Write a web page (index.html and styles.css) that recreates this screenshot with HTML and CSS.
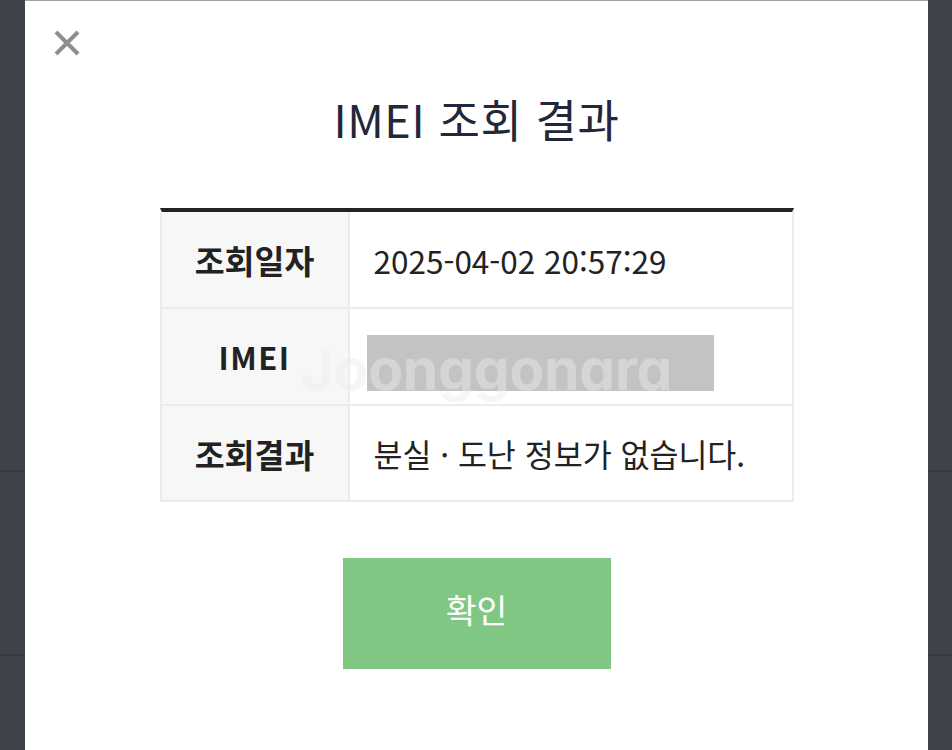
FILE: index.html
```html
<!DOCTYPE html>
<html lang="ko">
<head>
<meta charset="utf-8">
<title>IMEI 조회 결과</title>
<link rel="stylesheet" href="styles.css">
</head>
<body>
<div class="modal">
  <button class="close" aria-label="닫기">
    <svg width="26" height="26" viewBox="0 0 26 26"><path d="M2 2 L24 24 M24 2 L2 24" stroke="#8d8d92" stroke-width="4" stroke-linecap="butt" fill="none"/></svg>
  </button>
  <h1 class="title">IMEI 조회 결과</h1>
  <div class="result">
    <div class="row">
      <div class="label">조회일자</div>
      <div class="value">2025-04-02 20:57:29</div>
    </div>
    <div class="row">
      <div class="label imei">IMEI</div>
      <div class="value"><span class="masked"></span></div>
    </div>
    <div class="row">
      <div class="label">조회결과</div>
      <div class="value">분실 · 도난 정보가 없습니다.</div>
    </div>
    <div class="watermark">Joonggonara</div>
  </div>
  <button class="confirm">확인</button>
</div>
</body>
</html>
```

FILE: styles.css
```css
html, body {
  margin: 0;
  padding: 0;
}
body {
  background-color: #40434b;
  background-image:
    linear-gradient(to bottom, transparent 470px, #383b42 470px, #383b42 472px, transparent 472px),
    linear-gradient(to bottom, transparent 654px, #383b42 654px, #383b42 656px, transparent 656px);
  height: 750px;
  overflow: hidden;
  font-family: "Noto Sans CJK KR", "Noto Sans", sans-serif;
}
.modal {
  position: relative;
  margin-left: 25px;
  width: 903px;
  height: 760px;
  background: #ffffff;
  border-top: 1px solid #a3a3a6;
  box-sizing: border-box;
  display: flex;
  flex-direction: column;
  align-items: center;
}
.close {
  position: absolute;
  left: 29px;
  top: 29px;
  width: 26px;
  height: 26px;
  padding: 0;
  border: 0;
  background: none;
  cursor: pointer;
}
.close svg {
  display: block;
}
.title {
  margin: 86px 0 0;
  font-size: 45px;
  line-height: 64px;
  font-weight: 400;
  color: #24273a;
  letter-spacing: 0.6px;
}
.result {
  position: relative;
  margin-top: 57px;
  width: 634px;
  box-sizing: border-box;
  border-top: 4px solid #232323;
  border-left: 2px solid #ececec;
  border-right: 2px solid #ececec;
  border-bottom: 2px solid #ececec;
}
.row {
  display: grid;
  grid-template-columns: 188px 1fr;
  height: 97px;
  border-bottom: 2px solid #ececec;
  box-sizing: border-box;
}
.row:nth-child(3) {
  border-bottom: 0;
  height: 94px;
}
.label {
  background: #f7f7f7;
  border-right: 2px solid #ececec;
  display: flex;
  align-items: center;
  justify-content: center;
  font-size: 32.5px;
  font-weight: 700;
  color: #222222;
}
.label.imei {
  font-size: 31px;
  letter-spacing: 1.5px;
}
.value {
  display: flex;
  align-items: center;
  padding-left: 24px;
  font-size: 31.5px;
  color: #222222;
}
.masked {
  display: block;
  width: 347px;
  height: 56px;
  margin-left: -7px;
  margin-top: 12px;
  background: #c3c3c3;
}
.watermark {
  position: absolute;
  left: 139px;
  top: 126px;
  font-family: "Inter", "Lato", sans-serif;
  font-feature-settings: "cv11" 1;
  font-weight: 700;
  font-size: 57px;
  line-height: 64px;
  letter-spacing: -0.3px;
  color: rgba(236, 236, 236, 0.45);
  pointer-events: none;
  white-space: nowrap;
}
.confirm {
  margin-top: 56px;
  width: 268px;
  height: 111px;
  border: 0;
  padding: 0 0 11px;
  background: #81c784;
  color: #ffffff;
  font-family: "Noto Sans CJK KR", "Noto Sans", sans-serif;
  font-size: 33.5px;
  font-weight: 400;
  cursor: pointer;
}
```
